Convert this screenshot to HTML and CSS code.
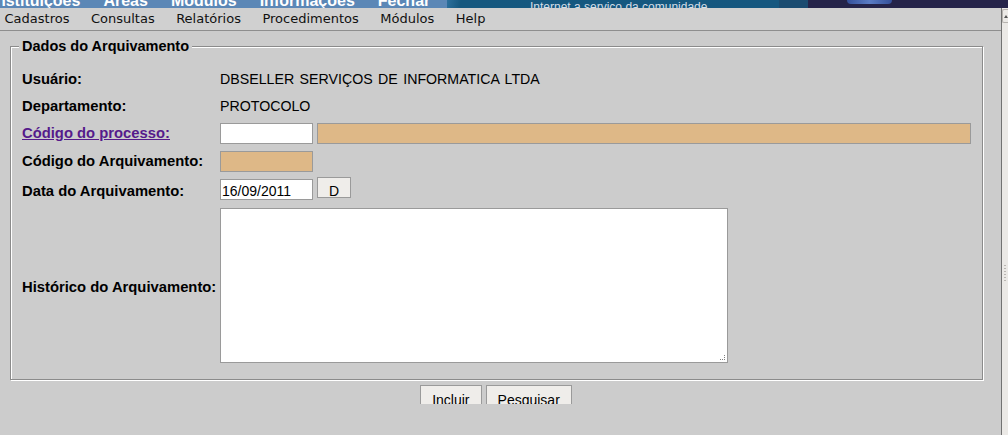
FILE: index.html
```html
<!DOCTYPE html>
<html lang="pt-BR">
<head>
<meta charset="utf-8">
<title>Dados do Arquivamento</title>
<link rel="stylesheet" href="styles.css">
</head>
<body>
<header class="topbar">
  <nav class="seg-nav">
    <span class="tn">Instituições</span>
    <span class="tn">Áreas</span>
    <span class="tn">Módulos</span>
    <span class="tn">Informações</span>
    <span class="tn">Fechar</span>
  </nav>
  <div class="seg-slogan"><span class="slogan">Internet a serviço da comunidade</span></div>
  <div class="seg-mid"></div>
  <div class="seg-brand"><span class="blob"></span></div>
</header>
<div class="frame">
  <div class="page">
    <nav class="menubar">
      <span class="mi">Cadastros</span>
      <span class="mi">Consultas</span>
      <span class="mi">Relatórios</span>
      <span class="mi">Procedimentos</span>
      <span class="mi">Módulos</span>
      <span class="mi">Help</span>
    </nav>
    <main class="content">
      <fieldset class="box">
        <legend class="legend">Dados do Arquivamento</legend>
        <div class="form">
          <div class="lbl">Usuário:</div>
          <div class="val spaced">DBSELLER SERVIÇOS DE INFORMATICA LTDA</div>

          <div class="lbl">Departamento:</div>
          <div class="val">PROTOCOLO</div>

          <div class="lbl"><a class="link" href="#">Código do processo:</a></div>
          <div class="val row-inputs">
            <input class="field w93" type="text">
            <input class="field ro wide" type="text" readonly>
          </div>

          <div class="lbl">Código do Arquivamento:</div>
          <div class="val row-inputs">
            <input class="field ro w93" type="text" readonly>
          </div>

          <div class="lbl base">Data do Arquivamento:</div>
          <div class="val base row-date">
            <input class="field w93" type="text" value="16/09/2011">
            <button class="btn btn-d" type="button">D</button>
          </div>

          <div class="lbl mid">Histórico do Arquivamento:</div>
          <div class="val top">
            <div class="area-wrap">
              <textarea class="area"></textarea>
              <span class="grip"></span>
            </div>
          </div>
        </div>
      </fieldset>
      <div class="actions">
        <button class="btn btn-act" type="button">Incluir</button>
        <button class="btn btn-act" type="button">Pesquisar</button>
      </div>
    </main>
  </div>
  <div class="vscroll">
    <div class="vs-up"><span class="vs-arrow"></span></div>
    <div class="vs-grip"></div>
  </div>
</div>
</body>
</html>
```

FILE: styles.css
```css
* { box-sizing: border-box; }

html, body {
  margin: 0;
  padding: 0;
}

body {
  width: 1008px;
  height: 435px;
  overflow: hidden;
  background: #cccccc;
  font-family: "Liberation Sans", Arial, sans-serif;
  color: #000;
}

/* ---------- top strip (partially visible header) ---------- */
.topbar {
  display: flex;
  height: 8px;
  overflow: hidden;
}

.seg-nav {
  width: 447px;
  flex: none;
  display: flex;
  gap: 23px;
  background: #5b87b6;
  color: #ffffff;
  font: bold 16px/16px "Liberation Sans", Arial, sans-serif;
  white-space: nowrap;
  overflow: hidden;
}

.tn { margin-top: -7px; }
.tn:first-child { margin-left: -8.5px; }

.seg-slogan {
  width: 332px;
  flex: none;
  background: linear-gradient(100deg, #2c6f9c 0, #15587f 14px, #15577f 100%);
  padding-left: 83px;
  white-space: nowrap;
  overflow: hidden;
}

.slogan {
  display: block;
  color: #d4dde6;
  font: 12px/14px "Liberation Sans", Arial, sans-serif;
}

.seg-mid {
  width: 29px;
  flex: none;
  background: #1a4b70;
}

.seg-brand {
  flex: 1;
  display: flex;
  background: #25244a;
}

.blob {
  display: block;
  margin-left: 39px;
  width: 45px;
  height: 4px;
  background: linear-gradient(90deg, #34509a, #5a7cc4 50%, #34509a);
  border-radius: 0 0 22px 22px;
}

/* ---------- frame: page + scrollbar ---------- */
.frame {
  display: flex;
  height: 427px;
}

.page {
  width: 1001px;
  flex: none;
  display: flex;
  flex-direction: column;
}

.menubar {
  height: 23px;
  flex: none;
  display: flex;
  align-items: center;
  gap: 21.5px;
  padding: 0 0 2px 4.5px;
  background: #d0d0d0;
  border-bottom: 1px solid #8e8e8e;
  font: 13px "DejaVu Sans", sans-serif;
  color: #111;
  white-space: nowrap;
}

.content {
  flex: 1;
  background: #cccccc;
  padding-top: 7px;
}

/* ---------- fieldset ---------- */
.box {
  margin: 0 18px 0 10px;
  padding: 11px 0 12px 11px;
  border: 1px solid #8b8b8b;
  box-shadow: inset 1px 1px 0 #ffffff, 1px 1px 0 #ffffff;
  min-width: 0;
}

.legend {
  padding: 0 3px;
  margin-left: -3px;
  background: #cccccc;
  font: bold 14.5px/17px "Liberation Sans", Arial, sans-serif;
}

.form {
  display: grid;
  grid-template-columns: 198px 1fr;
  grid-template-rows: 27px 27px 27px 28px 29px 163px;
  align-items: center;
}

.lbl {
  font: bold 14.8px/17px "Liberation Sans", Arial, sans-serif;
  white-space: nowrap;
}

.val {
  font: 14.2px/17px "Liberation Sans", Arial, sans-serif;
  white-space: nowrap;
}

.spaced { word-spacing: 1.5px; }

.link {
  color: #551a8b;
  text-decoration: underline;
}

.row-inputs {
  display: flex;
  gap: 4px;
}

.base { align-self: baseline; }

.row-date {
  display: flex;
  align-items: baseline;
  gap: 4px;
  padding-top: 2px;
}

.mid {
  align-self: center;
  padding-top: 3px;
}

.top {
  align-self: start;
  padding-top: 4px;
}

/* ---------- controls ---------- */
.field {
  height: 21px;
  margin: 0;
  padding: 3px 1px 0;
  border: 1px solid #9a9a9a;
  border-radius: 0;
  background: #ffffff;
  font: 14px/16px "Liberation Sans", Arial, sans-serif;
  color: #000;
  outline: none;
}

.w93 { width: 93px; }
.wide { width: 654px; }
.ro { background: #deb887; }

.btn {
  margin: 0;
  border: 1px solid #9a9a9a;
  border-radius: 0;
  background: #efedea;
  color: #000;
  font: 14px "Liberation Sans", Arial, sans-serif;
}

.btn-d {
  width: 34px;
  height: 21px;
  padding: 8px 0 0;
  line-height: 11px;
}

.area-wrap {
  position: relative;
  width: 508px;
  height: 155px;
}

.area {
  display: block;
  width: 508px;
  height: 155px;
  margin: 0;
  padding: 2px;
  border: 1px solid #9a9a9a;
  border-radius: 0;
  background: #ffffff;
  font: 14px "Liberation Sans", Arial, sans-serif;
  resize: none;
  outline: none;
}

/* resize grip dots drawn over the textarea corner */
.grip {
  position: absolute;
  right: 3px;
  bottom: 3px;
  width: 5px;
  height: 5px;
  background:
    linear-gradient(#808080, #808080) 4px 0 / 1px 1px no-repeat,
    linear-gradient(#808080, #808080) 4px 2px / 1px 1px no-repeat,
    linear-gradient(#808080, #808080) 4px 4px / 1px 1px no-repeat,
    linear-gradient(#808080, #808080) 2px 4px / 1px 1px no-repeat,
    linear-gradient(#808080, #808080) 0 4px / 1px 1px no-repeat;
}

.actions {
  display: flex;
  justify-content: center;
  align-items: flex-start;
  gap: 4px;
  height: 24px;
  padding: 5px 9px 0 0;
  overflow: hidden;
}

.btn-act {
  padding: 6px 11px 10px;
  line-height: 16px;
}

/* ---------- scrollbar ---------- */
.vscroll {
  width: 7px;
  flex: none;
  background: #ebe9e6;
  border-left: 1px solid #727272;
  display: flex;
  flex-direction: column;
}

.vs-up {
  height: 14px;
  margin-top: 1px;
  border: 1px solid #b5b2ae;
  border-right: none;
  border-radius: 2px 0 0 2px;
  display: flex;
  align-items: center;
  padding-left: 1px;
}

.vs-arrow {
  width: 0;
  height: 0;
  border-left: 2px solid transparent;
  border-right: 2px solid transparent;
  border-bottom: 3px solid #555;
}

.vs-grip {
  margin-top: 242px;
  margin-left: 2px;
  width: 2px;
  height: 18px;
  background: repeating-linear-gradient(180deg, #b9b6b2 0 1px, transparent 1px 3px);
}
```
